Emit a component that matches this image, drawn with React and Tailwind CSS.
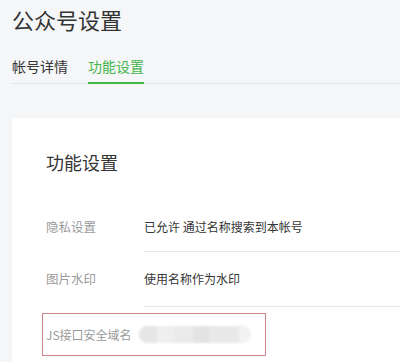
export default function App() {
  const font = { fontFamily: '"Noto Sans CJK SC", "Liberation Sans", sans-serif' };
  return (
    <div className="w-[400px] h-[362px] overflow-hidden bg-[#f5f6f8] text-[#353535]" style={font}>
      <div className="pl-[12px]">
        <h1 className="pt-[4px] text-[22px] leading-[30px] font-normal text-[#333]">公众号设置</h1>
        <div className="mt-[18px] flex border-b border-[#e2e4e7] h-[32px]">
          <div className="text-[14px] leading-[18px] pt-[5px] text-[#353535] mr-[20px]">帐号详情</div>
          <div className="relative text-[14px] leading-[18px] pt-[5px] text-[#44b549]">
            功能设置
            <div className="absolute left-0 right-0 bottom-[-1px] h-[2px] bg-[#44b549]"></div>
          </div>
        </div>
        <div className="mt-[34px] bg-white h-[300px] pl-[34px] pt-[32px]">
          <h2 className="text-[18px] leading-[24px] font-normal text-[#353535]">功能设置</h2>
          <div className="mt-[28px]">
            <div className="flex items-center h-[50px]">
              <div className="w-[98px] text-[12.5px] text-[#9a9a9a]">隐私设置</div>
              <div className="flex-1 h-full flex items-center border-b border-[#e7e7eb] text-[12px]">已允许 通过名称搜索到本帐号</div>
            </div>
            <div className="flex items-center h-[55px]">
              <div className="w-[98px] text-[12.5px] text-[#9a9a9a]">图片水印</div>
              <div className="flex-1 h-full flex items-center border-b border-[#e7e7eb] text-[12px]">使用名称作为水印</div>
            </div>
            <div className="mt-[6px] ml-[-4px] w-[224px] h-[43px] border border-[#cc858a] flex items-center pl-[3px]">
              <div className="w-[93px] text-[12px] text-[#9a9a9a] whitespace-nowrap">JS接口安全域名</div>
              <div className="relative w-[112px] h-[17px] rounded-full bg-[#ececec] overflow-hidden blur-[1px] flex">
                <div className="w-[18px] bg-[#e6e6e6]"></div>
                <div className="w-[16px] bg-[#efefef]"></div>
                <div className="w-[20px] bg-[#ebebeb]"></div>
                <div className="w-[16px] bg-[#e3e3e3]"></div>
                <div className="w-[30px] bg-[#e8e8e8]"></div>
                <div className="flex-1 bg-[#f2f2f2]"></div>
              </div>
            </div>
          </div>
        </div>
      </div>
    </div>
  );
}
